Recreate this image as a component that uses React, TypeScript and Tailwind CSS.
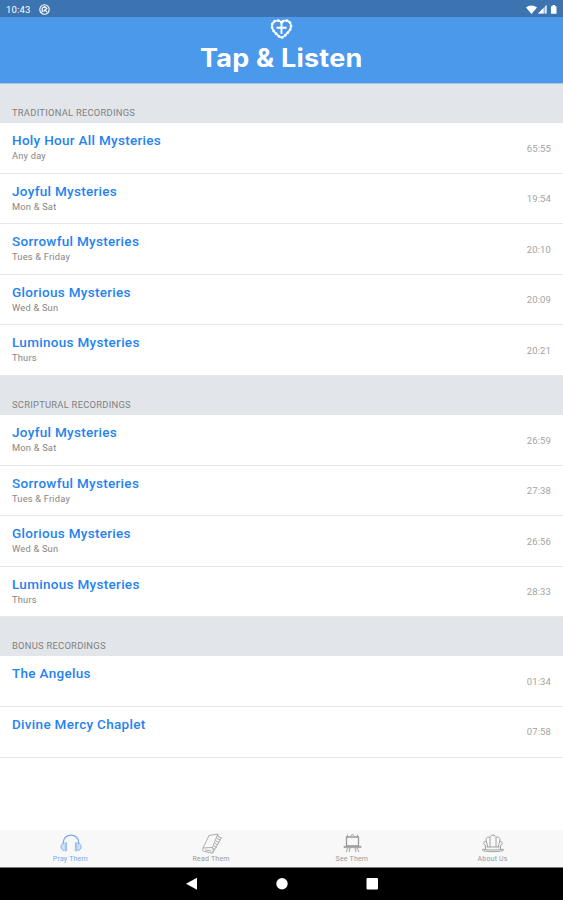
type Recording = { title: string; days?: string; time: string }

const sections: { name: string; items: Recording[] }[] = [
  {
    name: 'TRADITIONAL RECORDINGS',
    items: [
      { title: 'Holy Hour All Mysteries', days: 'Any day', time: '65:55' },
      { title: 'Joyful Mysteries', days: 'Mon & Sat', time: '19:54' },
      { title: 'Sorrowful Mysteries', days: 'Tues & Friday', time: '20:10' },
      { title: 'Glorious Mysteries', days: 'Wed & Sun', time: '20:09' },
      { title: 'Luminous Mysteries', days: 'Thurs', time: '20:21' },
    ],
  },
  {
    name: 'SCRIPTURAL RECORDINGS',
    items: [
      { title: 'Joyful Mysteries', days: 'Mon & Sat', time: '26:59' },
      { title: 'Sorrowful Mysteries', days: 'Tues & Friday', time: '27:38' },
      { title: 'Glorious Mysteries', days: 'Wed & Sun', time: '26:56' },
      { title: 'Luminous Mysteries', days: 'Thurs', time: '28:33' },
    ],
  },
  {
    name: 'BONUS RECORDINGS',
    items: [
      { title: 'The Angelus', time: '01:34' },
      { title: 'Divine Mercy Chaplet', time: '07:58' },
    ],
  },
]

function StatusBar() {
  return (
    <div className="h-[17px] shrink-0 bg-[#3b74b1] flex items-center pl-[6px] pr-[5px] text-white">
      <span className="text-[9.5px] leading-none tracking-[0.2px] pt-[2px]">10:43</span>
      <svg className="ml-[8px] mt-px" width="11" height="11" viewBox="0 0 11 11" fill="none" stroke="currentColor">
        <circle cx="5.5" cy="5.5" r="4.7" strokeWidth="1.1" />
        <path d="M3.2 8.5V4.2L5.5 2.5l2.3 1.7L4.5 7.5M5.5 5.5l2.6 2.7" strokeWidth="1.2" />
      </svg>
      <svg className="ml-auto mt-px" width="32" height="11" viewBox="0 0 32 11" fill="currentColor">
        <path d="M0 3.5C3.1.7 7.9.7 11 3.5L5.5 10z" />
        <path d="M12 9.5L20.5 1v8.500z" opacity=".5" />
        <path d="M12 9.500l5.500-5.500v5.500zM19.300 2.200l1.200-1.200v8.500h-1.200z" />
        <path d="M25 2.200h1.500V1H29v1.200h1.500v7.600H25z" />
      </svg>
    </div>
  )
}

function Header() {
  return (
    <div className="h-[67px] shrink-0 bg-[#4b99eb] border-b border-[#a9c9e9] flex flex-col items-center text-white">
      <svg className="mt-[2px]" width="23" height="20" viewBox="0 0 23 20" fill="none" stroke="currentColor">
        <path
          d="M11.5 3.500C9.500 1 5.500.8 3.200 3.400 1 6.500 1.800 10 4.600 13c2 2.200 4.200 5 6.900 5.600 2.700-.6 4.900-3.400 6.900-5.600 2.800-3 3.600-6.500 1.400-9.600C17.500.8 13.500 1 11.500 3.500z"
          strokeWidth="1.6"
        />
        <path
          d="M11.5 3.500C9.500 1 5.500.8 3.200 3.400 1 6.500 1.800 10 4.600 13c2 2.200 4.200 5 6.900 5.600 2.700-.6 4.900-3.400 6.900-5.600 2.800-3 3.600-6.500 1.400-9.600C17.500.8 13.500 1 11.500 3.500z"
          strokeWidth="2.7"
          strokeLinecap="round"
          strokeDasharray="0.1 3.6"
        />
        <path d="M11.5 3.500v11.500M6.500 8.800h10" strokeWidth="1.9" />
      </svg>
      <h1 className="mt-[4px] font-['Inter'] text-[25px] leading-[30px] font-bold scale-x-[1.08] tracking-[0.2px] whitespace-nowrap">
        Tap &amp; Listen
      </h1>
    </div>
  )
}

function Row({ item }: { item: Recording }) {
  return (
    <div className="h-[50.6px] border-b-[1.5px] border-[#e6e8ea] bg-white flex justify-between px-[12px]">
      <div className="pt-[9px]">
        <div className="text-[13.5px] leading-[17px] font-medium tracking-[0.3px] text-[#2583f0]">{item.title}</div>
        <div className="text-[9.3px] leading-[14px] tracking-[0.2px] text-[#858585]">{item.days}</div>
      </div>
      <div className="self-center pt-[1px] text-[9.5px] leading-none tracking-[0.1px] text-[#a3a3a3]">{item.time}</div>
    </div>
  )
}

function HeadphonesIcon() {
  return (
    <svg width="22" height="19" viewBox="0 0 22 19" fill="none" stroke="currentColor">
      <path d="M3.300 9.500V8.500C3.300 4 6.600 1.200 11 1.200s7.700 2.800 7.700 7.300v1" strokeWidth="1.300" />
      <path d="M5 8.800h1.600v8H5zM15.400 8.800H17v8h-1.600z" fill="currentColor" fillOpacity=".35" strokeWidth=".7" />
      <path d="M4.300 9.200C-.2 9.500-.2 16 4.300 16.500M17.700 9.200c4.500.3 4.500 6.800 0 7.300" fill="currentColor" fillOpacity=".3" strokeWidth=".9" />
    </svg>
  )
}

function BookIcon() {
  return (
    <svg width="22" height="21" viewBox="0 0 22 21" fill="none" stroke="currentColor" strokeWidth=".8">
      <path d="M8 2.500L16.800 1 11.500 14.500 2 15z" />
      <path d="M2 15c-1.200 2 0 3.300 1.500 3.500l8 1.700c1.200-1.200.9-3.800 0-5.700M16.800 1l.2 2.500 3.500 1.300L11.500 20.200" />
      <path d="M16 5.500l3.300 1.500M15 8l3.200 1.500M14 10.500l2.800 1.500M13 13l2.500 1.500M12.300 15.500l1.700 1M4 17l6.500 1" />
    </svg>
  )
}

function EaselIcon() {
  return (
    <svg width="19" height="20" viewBox="0 0 19 20" fill="none" stroke="currentColor" strokeWidth=".9">
      <path d="M3.500 4h12v9h-12z" strokeWidth="1.300" />
      <path d="M1 13.300h17v1.300H1zM5 4L4.200 1.500M7.500 3.500l2-2.500 2 2.500M14 4l.8-2.500M5 15l-2 4M7 15l-1 4M14 15l2 4M12 15l1 4" />
    </svg>
  )
}

function ChairIcon() {
  return (
    <svg width="22" height="19" viewBox="0 0 22 19" fill="none" stroke="currentColor" strokeWidth=".9">
      <path d="M8 13V3.500C8 .3 14 .3 14 3.500V13M8 3.500C6 2.300 3.800 3.500 4 6l1.800 7M14 3.500c2-1.200 4.200 0 4 2.500l-1.800 7" />
      <path d="M4.200 7.500C2.200 7.200 1.200 9 2 10.500l1.500 1V15M17.800 7.500c2-.3 3 1.500 2.200 3l-1.500 1V15M4.500 13h13" />
      <path d="M1 15.200c-.8 0-.8 1.300.3 1.600 6.200 1.200 13.200 1.200 19.400 0 1.100-.3 1.100-1.600.3-1.600-6 1.100-14 1.100-20 0z" />
    </svg>
  )
}

const tabs = [
  { label: 'Pray Them', icon: <HeadphonesIcon />, active: true },
  { label: 'Read Them', icon: <BookIcon /> },
  { label: 'See Them', icon: <EaselIcon /> },
  { label: 'About Us', icon: <ChairIcon /> },
]

function TabBar() {
  return (
    <div className="h-[37px] shrink-0 grid grid-cols-4 bg-[#f8f8f8]">
      {tabs.map((tab) => (
        <div
          key={tab.label}
          className={`flex flex-col items-center pt-[2px] ${tab.active ? 'text-[#75a9ee]' : 'text-[#999999]'}`}
        >
          <div className="h-[22px] flex items-center pl-px">{tab.icon}</div>
          <span className="text-[7px] leading-[11px] tracking-[0.2px]">{tab.label}</span>
        </div>
      ))}
    </div>
  )
}

function NavBar() {
  return (
    <div className="h-[33px] shrink-0 bg-black border-t border-[#777777] flex justify-center">
      <svg width="200" height="32" viewBox="0 0 200 32" fill="white">
        <path d="M4 15.800L15 9.800v12z" />
        <circle cx="100" cy="15.800" r="5.700" />
        <rect x="184.500" y="10" width="11.500" height="11.500" rx="1" />
      </svg>
    </div>
  )
}

export default function App() {
  return (
    <div className="h-[900px] w-full flex flex-col overflow-hidden bg-white font-['Roboto',sans-serif]">
      <StatusBar />
      <Header />
      <div className="flex-1 min-h-0">
        {sections.map((section) => (
          <div key={section.name}>
            <div className="h-[39px] bg-[#e2e6ea] flex items-end px-[12px] pb-[4px]">
              <span className="text-[9.4px] leading-[12px] tracking-[0.25px] text-[#808080]">{section.name}</span>
            </div>
            {section.items.map((item) => (
              <Row key={item.title} item={item} />
            ))}
          </div>
        ))}
      </div>
      <TabBar />
      <NavBar />
    </div>
  )
}
